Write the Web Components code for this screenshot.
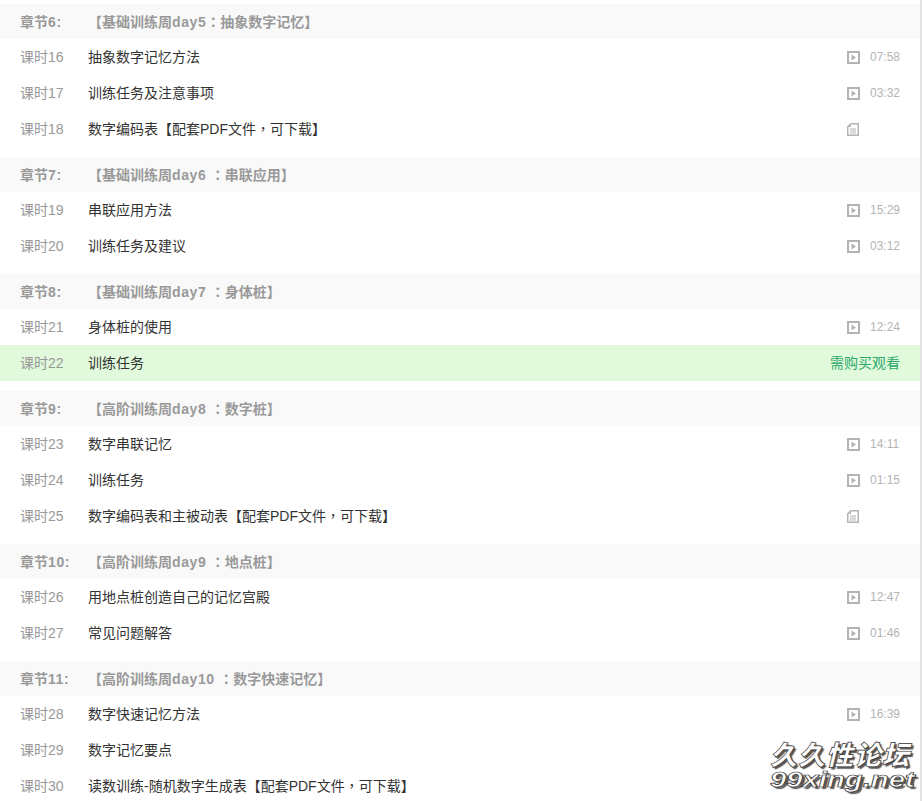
<!DOCTYPE html>
<html>
<head>
<meta charset="utf-8">
<title>课程目录</title>
<style>
    html, body{
        margin: 0;
        padding: 0;
        height: 801px;
        overflow: hidden;
        background: #fff;
    }
    body{
        font-family: "Liberation Sans", "Noto Sans CJK SC", sans-serif;
        font-size: 14px;
    }
    /* centred full width punctuation */
    .cp{
        font-family: "Noto Sans CJK TC", sans-serif;
    }
</style>
</head>
<body>
<course-list>
    <course-chapter label="章节6:" name="【基础训练周day5：抽象数字记忆】">
        <course-lesson num="16" time="07:58">抽象数字记忆方法</course-lesson>
        <course-lesson num="17" time="03:32">训练任务及注意事项</course-lesson>
        <course-lesson num="18" doc>数字编码表【配套PDF文件<span class="cp">，</span>可下载】</course-lesson>
    </course-chapter>
    <course-chapter label="章节7:" name="【基础训练周day6 ：串联应用】">
        <course-lesson num="19" time="15:29">串联应用方法</course-lesson>
        <course-lesson num="20" time="03:12">训练任务及建议</course-lesson>
    </course-chapter>
    <course-chapter label="章节8:" name="【基础训练周day7 ：身体桩】">
        <course-lesson num="21" time="12:24">身体桩的使用</course-lesson>
        <course-lesson num="22" locked>训练任务</course-lesson>
    </course-chapter>
    <course-chapter label="章节9:" name="【高阶训练周day8 ：数字桩】">
        <course-lesson num="23" time="14:11">数字串联记忆</course-lesson>
        <course-lesson num="24" time="01:15">训练任务</course-lesson>
        <course-lesson num="25" doc>数字编码表和主被动表【配套PDF文件<span class="cp">，</span>可下载】</course-lesson>
    </course-chapter>
    <course-chapter label="章节10:" name="【高阶训练周day9 ：地点桩】">
        <course-lesson num="26" time="12:47">用地点桩创造自己的记忆宫殿</course-lesson>
        <course-lesson num="27" time="01:46">常见问题解答</course-lesson>
    </course-chapter>
    <course-chapter label="章节11:" name="【高阶训练周day10 ：数字快速记忆】">
        <course-lesson num="28" time="16:39">数字快速记忆方法</course-lesson>
        <course-lesson num="29">数字记忆要点</course-lesson>
        <course-lesson num="30">读数训练-随机数字生成表【配套PDF文件<span class="cp">，</span>可下载】</course-lesson>
    </course-chapter>
</course-list>
<site-mark></site-mark>

<script>
class CourseList extends HTMLElement {
    connectedCallback(){
        const shadow = this.attachShadow({ mode: 'open' });
        shadow.innerHTML = `
<style>
    :host{
        display: flex;
        flex-direction: column;
        gap: 10px;
        box-sizing: border-box;
        width: 922px;
        padding-top: 4px;
        border-right: 2px solid #e4e4e4;
    }
</style>
<slot></slot>`;
    }
}

// bold latin runs are a bit wider in the reference, colon sits in the centre
var head_text = function(text){
    return text
        .replace(/[A-Za-z0-9: ]+/g, '<span class="latin">$&</span>')
        .replace(/：/g, '<span class="cp">：</span>');
}

class CourseChapter extends HTMLElement {
    connectedCallback(){
        const shadow = this.attachShadow({ mode: 'open' });
        shadow.innerHTML = `
<style>
    :host{
        display: block;
    }
    .head{
        display: flex;
        align-items: center;
        height: 35px;
        padding-left: 20px;
        background: #f9f9f9;
        color: #999;
        font-weight: bold;
    }
    .label{
        width: 68px;
        flex: none;
        padding-bottom: 2px;
    }
    .name{
        padding-bottom: 2px;
    }
    .latin{
        letter-spacing: .6px;
    }
    .cp{
        font-family: "Noto Sans CJK TC", sans-serif;
    }
</style>
<div class="head">
    <span class="label">`+head_text(this.getAttribute('label'))+`</span>
    <span class="name">`+head_text(this.getAttribute('name'))+`</span>
</div>
<slot></slot>`;
    }
}

const play_icon = `<svg width="13" height="13" viewBox="0 0 13 13">
    <rect x="1" y="1" width="11" height="11" fill="none" stroke="#b3b3b3" stroke-width="2"/>
    <path d="M4.5 3.5 L9 6.5 L4.5 9.5 Z" fill="#b3b3b3"/>
</svg>`;
const doc_icon = `<svg width="13" height="13" viewBox="0 0 13 13">
    <path d="M3.5 0 H12 V13 H0 V3.5 Z M4 1.5 L1.5 4 V11.5 H10.5 V1.5 Z" fill="#b3b3b3" fill-rule="evenodd"/>
    <path d="M4 1.5 V4 H1.5 Z" fill="#b3b3b3"/>
    <path d="M3 6 H9 M3 8 H9 M3 10 H9" stroke="#b3b3b3" stroke-width="1"/>
</svg>`;

class CourseLesson extends HTMLElement {
    connectedCallback(){
        const shadow = this.attachShadow({ mode: 'open' });
        const time = this.getAttribute('time');
        var side = '';
        if (this.hasAttribute('locked')){
            side = `<span class="buy">需购买观看</span>`;
        } else if (this.hasAttribute('doc')){
            side = `<span class="icon">`+doc_icon+`</span><span class="time"></span>`;
        } else if (time){
            side = `<span class="icon">`+play_icon+`</span><span class="time">`+time+`</span>`;
        }
        shadow.innerHTML = `
<style>
    :host{
        display: flex;
        align-items: center;
        height: 36px;
        padding: 0 20px;
        color: #333;
    }
    :host([locked]){
        background: #e1fadc;
    }
    .num{
        width: 68px;
        flex: none;
        color: #999;
        padding-bottom: 2px;
    }
    .title{
        flex: 1;
        padding-bottom: 2px;
    }
    .side{
        display: flex;
        align-items: center;
    }
    .icon{
        display: flex;
        margin-right: 10px;
    }
    .time{
        width: 30px;
        font-size: 12px;
        color: #b4b4b4;
    }
    .buy{
        color: #2aa86a;
        padding-bottom: 2px;
    }
</style>
<span class="num">课时`+this.getAttribute('num')+`</span>
<span class="title"><slot></slot></span>
<span class="side">`+side+`</span>`;
    }
}

class SiteMark extends HTMLElement {
    connectedCallback(){
        const shadow = this.attachShadow({ mode: 'open' });
        shadow.innerHTML = `
<style>
    :host{
        position: absolute;
        left: 770px;
        top: 740px;
        width: 146px;
        color: #fff;
        font-style: italic;
        font-weight: 900;
        white-space: nowrap;
        -webkit-text-stroke: .7px #333;
        text-shadow: 2px 2px 1px #555;
    }
    .cn{
        height: 28px;
        font-size: 27px;
        line-height: 28px;
        letter-spacing: 1px;
        font-family: "Noto Sans CJK SC", sans-serif;
    }
    .en{
        height: 24px;
        font-size: 22px;
        line-height: 24px;
        font-family: "Liberation Sans", sans-serif;
        transform: scaleX(1.33);
        transform-origin: left top;
    }
</style>
<div class="cn">久久性论坛</div>
<div class="en">99xing.net</div>`;
    }
}

customElements.define('course-list', CourseList);
customElements.define('course-chapter', CourseChapter);
customElements.define('course-lesson', CourseLesson);
customElements.define('site-mark', SiteMark);
</script>
</body>
</html>
